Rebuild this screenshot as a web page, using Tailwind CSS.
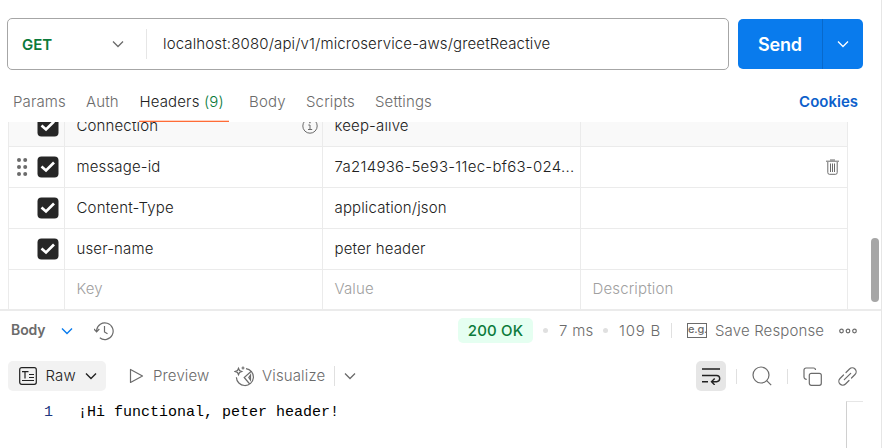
<!DOCTYPE html>
<html lang="en">
<head>
<meta charset="utf-8">
<title>Request</title>
<script src="https://cdn.jsdelivr.net/npm/@tailwindcss/browser@4"></script>
</head>
<body class="bg-white">
<div class="flex h-[448px] w-[882px] flex-col overflow-hidden border-r border-[#e6e6e6] font-['Inter','Noto_Sans',sans-serif] text-[15px] leading-5 font-[360] tracking-[0.14px] whitespace-nowrap text-[#6b6b6b]">

  <!-- Request line -->
  <div class="flex h-[70px] shrink-0 gap-[9px] pt-[18px] pl-[7px]">
    <div class="flex h-[52px] w-[722px] items-center rounded-[5px] border border-[#a6a6a6]">
      <div class="flex w-[138px] items-center justify-between pr-[22px] pl-[14px]">
        <span class="pt-px font-semibold tracking-normal text-[#0b7a3b]">GET</span>
        <svg class="h-3 w-3" viewBox="0 0 12 12" fill="none" stroke="#6b6b6b" stroke-width="1.3"><path d="M1 3.5l5 5 5-5"/></svg>
      </div>
      <div class="h-[30px] w-px bg-[#e6e6e6]"></div>
      <div class="pl-[16px] text-[#212121]">localhost:8080/api/v1/microservice-aws/greetReactive</div>
    </div>
    <div class="mt-px flex h-[50px] w-[125px] overflow-hidden rounded-[5px] bg-[#097bed] text-white">
      <div class="flex w-[84px] items-center justify-center pt-px text-[18px] font-semibold tracking-[-0.2px]">Send</div>
      <div class="w-px bg-[#0869cb]"></div>
      <div class="flex flex-1 items-center justify-center">
        <svg class="h-3 w-3" viewBox="0 0 12 12" fill="none" stroke="#fff" stroke-width="1.3"><path d="M1 3.5l5 5 5-5"/></svg>
      </div>
    </div>
  </div>

  <!-- Tabs -->
  <div class="relative z-10 flex h-[52px] shrink-0 items-stretch pr-[23px] pl-[13px] leading-[64px]">
    <div class="w-[73px]">Params</div>
    <div class="w-[53px]">Auth</div>
    <div class="w-[90px] pl-[0.5px] text-[#212121] shadow-[inset_0_-1px_0_#ff6c37,inset_0_-2px_0_#ffd3c3]">Headers <span class="text-[#0b7a3b]">(9)</span></div>
    <div class="ml-[20px] w-[57px]">Body</div>
    <div class="w-[69px]">Scripts</div>
    <div>Settings</div>
    <div class="ml-auto font-semibold tracking-normal text-[#0d5fcb]">Cookies</div>
  </div>

  <!-- Headers table -->
  <div class="flex h-[187px] shrink-0 pl-[8px]">
    <div class="flex h-[187px] w-[840px] flex-col justify-end overflow-hidden border-x border-[#ebebeb] text-[#212121]">
      <div class="grid h-[41px] shrink-0 grid-cols-[56px_258px_258px_266px] border-b border-[#ebebeb] bg-[#f9f9f9]">
        <div class="flex items-center justify-end border-r border-[#ebebeb] pr-[5px]">
          <svg class="h-[22px] w-[22px]" viewBox="0 0 22 22"><rect x=".5" y=".5" width="21" height="21" rx="4" fill="#262626"/><path d="M4.5 10.5l4.500 4 8-8" fill="none" stroke="#fff" stroke-width="2.7"/></svg>
        </div>
        <div class="flex items-center justify-between border-r border-[#ebebeb] pr-[4px] pl-[11.5px]">
          <span>Connection</span>
          <svg class="h-4 w-4" viewBox="0 0 16 16" fill="none" stroke="#6b6b6b"><circle cx="8" cy="8" r="7.2"/><path d="M6.3 7H8v4.3M6 11.5h4.2"/><path d="M7.2 4.5h1.4" stroke-width="1.4"/></svg>
        </div>
        <div class="flex items-center border-r border-[#ebebeb] pl-[11.5px]">keep-alive</div>
        <div></div>
      </div>
      <div class="grid h-[41px] shrink-0 grid-cols-[56px_258px_258px_266px] border-b border-[#ebebeb]">
        <div class="flex items-center justify-between border-r border-[#ebebeb] pr-[5px] pl-[7px]">
          <svg class="h-[20px] w-[12px]" viewBox="0 0 12 20" fill="#6b6b6b"><circle cx="3" cy="3" r="2"/><circle cx="9.2" cy="3" r="2"/><circle cx="3" cy="10" r="2"/><circle cx="9.2" cy="10" r="2"/><circle cx="3" cy="17" r="2"/><circle cx="9.2" cy="17" r="2"/></svg>
          <svg class="h-[22px] w-[22px]" viewBox="0 0 22 22"><rect x=".5" y=".5" width="21" height="21" rx="4" fill="#262626"/><path d="M4.5 10.5l4.500 4 8-8" fill="none" stroke="#fff" stroke-width="2.7"/></svg>
        </div>
        <div class="flex items-center border-r border-[#ebebeb] pl-[11.5px]">message-id</div>
        <div class="flex items-center border-r border-[#ebebeb] pl-[11.5px] tracking-[0.28px]">7a214936-5e93-11ec-bf63-024...</div>
        <div class="flex items-center justify-end pr-[8px]">
          <svg class="h-4 w-[13px]" viewBox="0 0 13 16" fill="none" stroke="#6b6b6b"><path d="M0 2.2h13M4 1h5M1.8 3v10.5q0 1.8 1.6 1.8h6.2q1.6 0 1.6-1.8V3M4.5 4.5v8.5M6.5 4.5v8.5M8.5 4.5v8.5"/></svg>
        </div>
      </div>
      <div class="grid h-[41px] shrink-0 grid-cols-[56px_258px_258px_266px] border-b border-[#ebebeb]">
        <div class="flex items-center justify-end border-r border-[#ebebeb] pr-[5px]">
          <svg class="h-[22px] w-[22px]" viewBox="0 0 22 22"><rect x=".5" y=".5" width="21" height="21" rx="4" fill="#262626"/><path d="M4.5 10.5l4.500 4 8-8" fill="none" stroke="#fff" stroke-width="2.7"/></svg>
        </div>
        <div class="flex items-center border-r border-[#ebebeb] pl-[11.5px] tracking-[0.2px]">Content-Type</div>
        <div class="flex items-center border-r border-[#ebebeb] pl-[11.5px]">application/json</div>
        <div></div>
      </div>
      <div class="grid h-[41px] shrink-0 grid-cols-[56px_258px_258px_266px] border-b border-[#ebebeb]">
        <div class="flex items-center justify-end border-r border-[#ebebeb] pr-[5px]">
          <svg class="h-[22px] w-[22px]" viewBox="0 0 22 22"><rect x=".5" y=".5" width="21" height="21" rx="4" fill="#262626"/><path d="M4.5 10.5l4.500 4 8-8" fill="none" stroke="#fff" stroke-width="2.7"/></svg>
        </div>
        <div class="flex items-center border-r border-[#ebebeb] pl-[11.5px]">user-name</div>
        <div class="flex items-center border-r border-[#ebebeb] pl-[11.5px]">peter header</div>
        <div></div>
      </div>
      <div class="grid h-[39px] shrink-0 grid-cols-[56px_258px_258px_266px] text-[#a0a0a0]">
        <div class="border-r border-[#ebebeb]"></div>
        <div class="flex items-center border-r border-[#ebebeb] pb-px pl-[11.5px]">Key</div>
        <div class="flex items-center border-r border-[#ebebeb] pb-px pl-[11.5px]">Value</div>
        <div class="flex items-center pb-px pl-[11.5px]">Description</div>
      </div>
    </div>
    <div class="mt-[116px] ml-[23px] h-[64px] w-[8px] rounded-full bg-[#a6a6a6]"></div>
  </div>

  <!-- Response header -->
  <div class="flex h-[43px] shrink-0 items-center border-t-2 border-[#ebebeb] pb-[2px] pl-[11px]">
    <span class="w-[50px] pb-px text-[14px] font-semibold tracking-[-0.1px]">Body</span>
    <svg class="h-3 w-3" viewBox="0 0 12 12" fill="none" stroke="#097bed" stroke-width="1.4"><path d="M1 3.5l5 5 5-5"/></svg>
    <svg class="ml-[21px] h-5 w-5" viewBox="0 0 20 20" fill="none" stroke="#6b6b6b" stroke-width="1.2"><path d="M2.6 10.5V9.2a8.3 8.3 0 1 1 3.2 7.6M0 8l2.6 2.9L5.3 8M10.5 5v6l3 1.8"/></svg>
    <div class="ml-[344px] flex h-[25px] w-[75px] items-center justify-center rounded-[5px] bg-[#e5fff1] font-medium text-[#0b7a3b]">200 OK</div>
    <div class="ml-[10px] h-[5px] w-[5px] rounded-full bg-[#e0e0e0]"></div>
    <span class="ml-[11px] w-[44px] tracking-[0.3px]">7 ms</span>
    <div class="h-[5px] w-[5px] rounded-full bg-[#e0e0e0]"></div>
    <span class="ml-[11px] w-[52px] tracking-[0.8px]">109 B</span>
    <div class="h-[15px] w-px bg-[#e0e0e0]"></div>
    <div class="ml-[15px] h-[15px] w-[20px] border border-[#6b6b6b] text-center text-[11px] leading-[11px] font-medium tracking-[-0.2px]">e.g.</div>
    <span class="ml-[8px] w-[124px]">Save Response</span>
    <svg class="h-[6px] w-[18px]" viewBox="0 0 18 6" fill="none" stroke="#6b6b6b" stroke-width="1.2"><circle cx="2.5" cy="3" r="1.8"/><circle cx="9" cy="3" r="1.8"/><circle cx="15.5" cy="3" r="1.8"/></svg>
  </div>

  <!-- Response toolbar -->
  <div class="flex h-[48px] shrink-0 items-center pl-[8px]">
    <div class="flex h-[30px] w-[98px] items-center rounded-[5px] bg-[#f2f2f2] pl-[11px] text-[#212121]">
      <svg class="h-[18px] w-[18px]" viewBox="0 0 18 18" fill="none" stroke="#212121" stroke-width="1.2"><rect x=".7" y=".7" width="16.6" height="16.6" rx="2"/><path d="M3 4.600h6.500M6 4.600v7M10 7.500h5M10 10.500h5M3 13.500h12"/></svg>
      <span class="ml-[8.5px] w-[39.5px]">Raw</span>
      <svg class="h-3 w-3" viewBox="0 0 12 12" fill="none" stroke="#212121" stroke-width="1.4"><path d="M1 3.5l5 5 5-5"/></svg>
    </div>
    <svg class="ml-[23px] h-[16px] w-[15px]" viewBox="0 0 15 16" fill="none" stroke="#6b6b6b" stroke-width="1.2" stroke-linejoin="round"><path d="M1.5 1.5v13L13.5 8z"/></svg>
    <span class="ml-[9px] w-[81px]">Preview</span>
    <svg class="h-[21px] w-[21px]" viewBox="0 0 21 21" fill="none" stroke="#6b6b6b" stroke-width="1.2"><path d="M4.5 2.2l1 2.3 2.300 1-2.300 1-1 2.300-1-2.300-2.300-1 2.300-1zM9 .5v3M7.500 2h3M12 2.600a8.500 8.500 0 1 1-9.600 8.600M17.300 5.200l-7.100 6.300 5.500 6.500M16.500 9l-1.700 2.600 1.700 2.400z"/></svg>
    <span class="ml-[7px] w-[72px]">Visualize</span>
    <div class="h-[20px] w-px bg-[#e0e0e0]"></div>
    <svg class="ml-[9px] h-3 w-3" viewBox="0 0 12 12" fill="none" stroke="#6b6b6b" stroke-width="1.3"><path d="M1 3.5l5 5 5-5"/></svg>
    <div class="ml-[340px] flex h-[30px] w-[30px] items-center justify-center rounded-[5px] bg-[#e6e6e6]">
      <svg class="h-[18px] w-[20px]" viewBox="0 0 20 18" fill="none" stroke="#212121" stroke-width="1.4"><path d="M1 2h18M1 8.500h14.600a3 3 0 0 1 0 6.200H11M1 14.700h6M13.700 11.500l-3.200 3.200 3.200 3.200"/></svg>
    </div>
    <div class="ml-[10px] h-[15px] w-px bg-[#e0e0e0]"></div>
    <svg class="ml-[15px] h-5 w-5" viewBox="0 0 20 20" fill="none" stroke="#6b6b6b" stroke-width="1.2"><circle cx="9" cy="9" r="8"/><path d="M14.7 14.7l4.5 4.5"/></svg>
    <div class="ml-[15px] h-[15px] w-px bg-[#e0e0e0]"></div>
    <svg class="ml-[15px] h-[19px] w-[19px]" viewBox="0 0 19 19" fill="none" stroke="#6b6b6b" stroke-width="1.2"><rect x="6.3" y="6.3" width="12" height="12" rx="2"/><path d="M3.7 12.300A2.500 2.500 0 0 1 1 10V3a2 2 0 0 1 2-2h7.500a2 2 0 0 1 2 2"/></svg>
    <svg class="ml-[16px] h-[19px] w-[19px]" viewBox="0 0 19 19" fill="none" stroke="#6b6b6b" stroke-width="1.2" stroke-linecap="round"><path d="M6.300 12.700l6.400-6.400M8 5.500l3.500-3.500a3.800 3.800 0 0 1 5.500 5.500L13.500 11M11 13.500L7.500 17a3.800 3.800 0 0 1-5.500-5.500L5.500 8"/></svg>
  </div>

  <!-- Response body -->
  <div class="flex flex-1 font-['Liberation_Mono',monospace] text-[15px] font-normal tracking-normal text-black">
    <div class="w-[53px] pt-[3px] text-right text-[#1f377f]">1</div>
    <div class="w-[793px] pt-[3px] pl-[25px]">¡Hi functional, peter header!</div>
    <div class="mt-px w-[17px] border-t border-l border-t-[#e6e6e6] border-l-[#d0d0d0]"></div>
  </div>
</div>
</body>
</html>
